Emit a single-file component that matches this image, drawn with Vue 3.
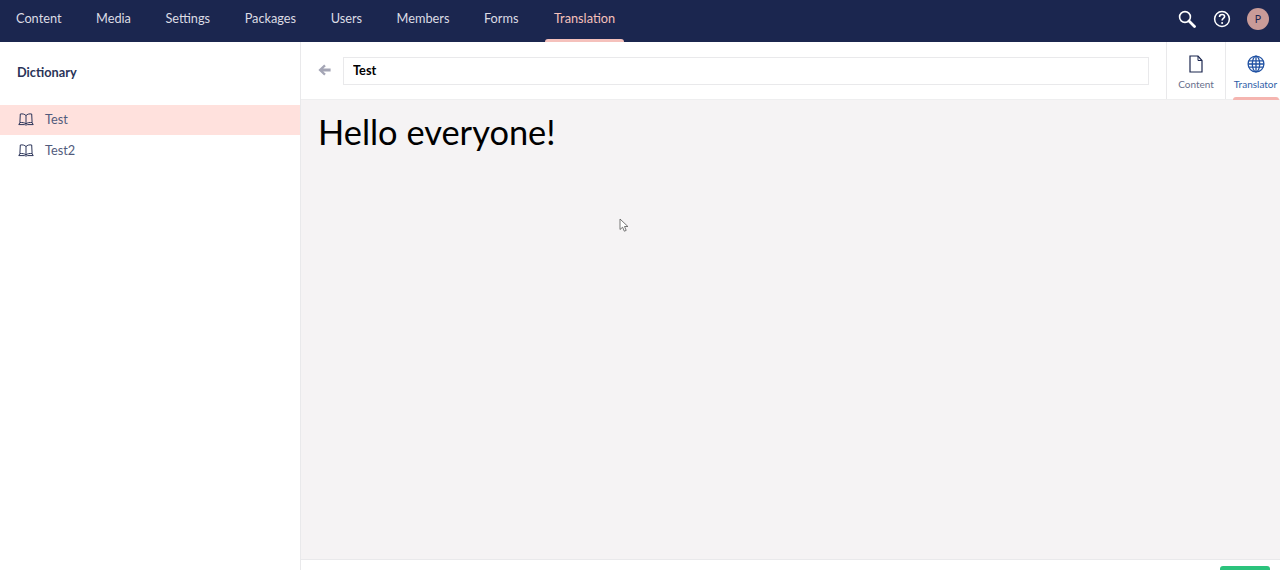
<template>
  <div class="app">
    <header class="topbar">
      <nav class="sections">
        <a v-for="s in sections" :key="s" class="section" :class="{ active: s === 'Translation' }">{{ s }}</a>
      </nav>
      <div class="tools">
        <svg class="tool" width="18" height="18" viewBox="0 0 18 18" fill="none" stroke="#fff">
          <circle cx="7" cy="7" r="5.4" stroke-width="1.6" />
          <path d="M11 11l5.5 5.5" stroke-width="2.8" stroke-linecap="round" />
        </svg>
        <svg class="tool" width="18" height="18" viewBox="0 0 18 18" fill="none" stroke="#fff">
          <circle cx="9" cy="9" r="7.4" stroke-width="1.5" />
          <path d="M6.5 7c0-1.6 1.1-2.5 2.6-2.5s2.5.9 2.5 2.1c0 1.9-2.5 1.9-2.5 3.9" stroke-width="1.6" />
          <circle cx="9.1" cy="13" r="1" fill="#fff" stroke="none" />
        </svg>
        <div class="avatar">P</div>
      </div>
    </header>

    <div class="body">
      <aside class="sidebar">
        <h3 class="tree-title">Dictionary</h3>
        <ul class="tree">
          <li v-for="item in items" :key="item" class="tree-item" :class="{ selected: item === 'Test' }">
            <svg width="16" height="13" viewBox="0 0 16 13" fill="none" stroke="#2a3358" stroke-width="1">
              <path d="M8 2.6C6.8 1.1 4.4.6 2.3 1L1.9 9.6c2.3-.3 4.7 0 6.1 1.3 1.4-1.3 3.8-1.6 6.1-1.3L13.7 1C11.6.6 9.2 1.1 8 2.6zM8 2.6v8.3" />
              <path d="M1.9 9.6L.8 11.6h5.7c.5 0 1 .5 1.5.5s1-.5 1.5-.5h5.7l-1.1-2" />
            </svg>
            <span>{{ item }}</span>
          </li>
        </ul>
      </aside>

      <main class="editor">
        <div class="editor-header">
          <svg class="back" width="13" height="12" viewBox="0 0 13 12" fill="#a4a5b5">
            <path d="M6.2.6L7.8 2.2 5.2 4.6H12.6V7.4H5.2L7.8 9.8 6.2 11.4.4 6z" />
          </svg>
          <input class="name" value="Test" readonly />
          <div class="apps">
            <div class="app-tab">
              <svg width="14" height="18" viewBox="0 0 14 18" fill="none" stroke="#1b264f" stroke-width="1.2">
                <path d="M1 1h8l4 4.5V17H1z" />
                <path d="M9 1v4.5h4" stroke-width="1" />
              </svg>
              <span>Content</span>
            </div>
            <div class="app-tab current">
              <svg width="18" height="18" viewBox="0 0 18 18" fill="none" stroke="#2152a3" stroke-width="1.3">
                <circle cx="9" cy="9" r="7.9" />
                <ellipse cx="9" cy="9" rx="3.7" ry="7.9" />
                <path d="M9 1v16M1.8 5.8h14.4M1.8 12.2h14.4M1 9h16" />
              </svg>
              <span>Translator</span>
              <i class="tab-mark"></i>
            </div>
          </div>
        </div>
        <div class="editor-content">
          <h1 class="hello">Hello everyone!</h1>
        </div>
        <div class="editor-footer">
          <button class="save"></button>
        </div>
      </main>
    </div>

    <svg class="cursor" width="11" height="15" viewBox="0 0 11 15" fill="#fff" stroke="#555" stroke-width="0.8">
      <path d="M1 1v10.5l2.6-2.3 1.7 4 1.9-.8-1.7-3.9h3.4z" />
    </svg>
  </div>
</template>

<script setup>
const sections = ['Content', 'Media', 'Settings', 'Packages', 'Users', 'Members', 'Forms', 'Translation']
const items = ['Test', 'Test2']
</script>

<style>
html, body {
  margin: 0;
  height: 100%;
  overflow: hidden;
}
</style>

<style scoped>
.app {
  position: relative;
  display: flex;
  flex-direction: column;
  height: 570px;
  font-family: Lato, "Liberation Sans", sans-serif;
  color: #1b264f;
  background: #fff;
}

.topbar {
  display: flex;
  justify-content: space-between;
  align-items: center;
  flex: 0 0 42px;
  background: #1b264f;
}

.sections {
  display: flex;
  height: 100%;
}

.section {
  position: relative;
  display: flex;
  align-items: center;
  padding: 0 17.5px 6px 17px;
  font-size: 12.75px;
  color: #dcdce4;
}

.section:first-child {
  padding-left: 16px;
}

.section.active {
  color: #f5c1bc;
  padding: 0 9px 6px 9px;
  margin-left: 9px;
}

.section.active::after {
  content: "";
  position: absolute;
  left: 0;
  right: 0;
  bottom: 0;
  height: 3px;
  border-radius: 3px 3px 0 0;
  background: #f5c1bc;
}

.tools {
  display: flex;
  align-items: center;
  gap: 17px;
  padding: 0 11px 5px 0;
}

.avatar {
  display: flex;
  align-items: center;
  justify-content: center;
  width: 22px;
  height: 22px;
  margin-left: -1px;
  border-radius: 50%;
  background: #c99b98;
  color: #1b264f;
  font-size: 10.5px;
}

.body {
  display: flex;
  flex: 1;
  min-height: 0;
}

.sidebar {
  flex: 0 0 300px;
  border-right: 1px solid #e9e9eb;
}

.tree-title {
  margin: 0;
  padding: 22px 17px 0;
  font-size: 12.75px;
  line-height: 17px;
  font-weight: 700;
  color: #2a3358;
}

.tree {
  list-style: none;
  margin: 24px 0 0;
  padding: 0;
}

.tree-item {
  display: flex;
  align-items: center;
  gap: 11px;
  box-sizing: border-box;
  height: 30px;
  margin-bottom: 1px;
  padding: 0 0 1px 18px;
  font-size: 12.75px;
  color: #515b7c;
}

.tree-item span {
  margin-bottom: 2px;
}

.tree-item.selected {
  background: #ffe1dd;
}

.editor {
  display: flex;
  flex-direction: column;
  flex: 1;
  min-width: 0;
}

.editor-header {
  display: flex;
  align-items: center;
  flex: 0 0 58px;
  box-sizing: border-box;
  border-bottom: 1px solid #eeeeef;
  padding-left: 17px;
}

.back {
  flex: none;
  margin-right: 12px;
  margin-bottom: 2px;
}

.name {
  flex: 1;
  min-width: 0;
  height: 28px;
  box-sizing: border-box;
  margin-right: 17px;
  padding: 0 9px 2px;
  border: 1px solid #e9e9eb;
  outline: none;
  font: 700 12.75px Lato, "Liberation Sans", sans-serif;
  color: #000;
}

.apps {
  display: flex;
  align-self: stretch;
  flex: none;
}

.app-tab {
  position: relative;
  display: flex;
  flex-direction: column;
  align-items: center;
  justify-content: center;
  gap: 5px;
  width: 59px;
  box-sizing: border-box;
  padding-top: 4px;
  border-left: 1px solid #e9e9eb;
  font-size: 10px;
  line-height: 12px;
  color: #68708c;
}

.app-tab.current {
  width: 55px;
  padding-left: 5px;
  color: #2f5ea8;
  white-space: nowrap;
}

.tab-mark {
  position: absolute;
  left: 7px;
  right: 1px;
  bottom: -1px;
  height: 3px;
  border-radius: 3px 3px 0 0;
  background: #f5b5b0;
}

.editor-content {
  flex: 1;
  padding: 12px 17px;
  background: #f5f3f4;
}

.hello {
  margin: 0;
  font-size: 34.4px;
  line-height: 40px;
  font-weight: 400;
  color: #000;
}

.editor-footer {
  display: flex;
  justify-content: flex-end;
  flex: 0 0 11px;
  box-sizing: border-box;
  border-top: 1px solid #e9e9eb;
  padding: 6px 10px 0 0;
  overflow: hidden;
}

.save {
  width: 50px;
  height: 30px;
  border: 0;
  border-radius: 3px;
  background: #2bc37c;
}

.cursor {
  position: absolute;
  left: 619px;
  top: 218px;
}
</style>
